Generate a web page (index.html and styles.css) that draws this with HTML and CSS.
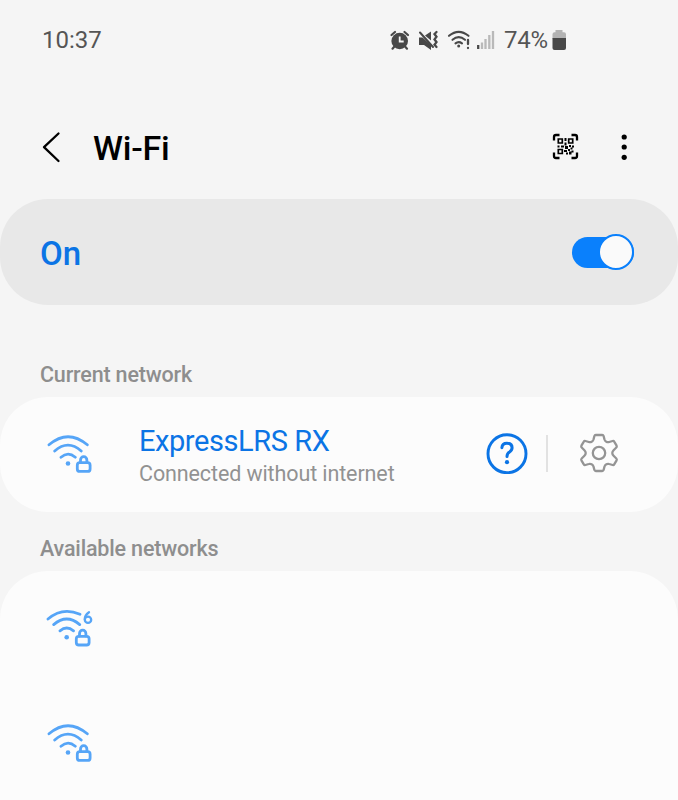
FILE: index.html
```html
<!DOCTYPE html>
<html lang="en">
<head>
<meta charset="utf-8">
<title>Wi-Fi</title>
<link rel="stylesheet" href="styles.css">
</head>
<body>
<div class="status">
  <span class="clock">10:37</span>
  <div class="indicators">
    <svg width="114" height="28" viewBox="386 26 114 28" fill="none" stroke="#484848" stroke-linecap="round">
      <circle cx="399.7" cy="41" r="8.300" fill="#484848" stroke="none"/>
      <path d="M391.5 35l3.5-3M408 35l-3.500-3M394 47l-1.500 1.700M405.500 47l1.500 1.700" stroke-width="2.200"/>
      <path d="M399.700 36.500v5h4" stroke="#f5f5f5" stroke-width="1.800" stroke-linecap="butt"/>
      <path d="M419 37.500h3.500l8.500 7.500v5l-7-5H419zM425 35.500l6-4v9z" fill="#484848" stroke="none"/>
      <path d="M420 32.500l13 14.500" stroke-width="2"/>
      <path d="M436.500 32l-2 2 2 2.700-2 2.700 2 2.700-2 2.700 2 2.200" stroke-width="2.300"/>
      <path d="M449 35.800Q458.700 27.800 468.500 35.800M452.500 39.800Q458.700 34.600 465 39.800M455.500 43.300Q458.700 40.800 462 43.300" stroke-width="2.100"/>
      <circle cx="458.700" cy="46" r="1.500" fill="#484848" stroke="none"/>
      <path d="M468 40v4M468 48v.1" stroke-width="2.300"/>
      <path d="M478.200 45v4" stroke-width="2.300" stroke-linecap="butt"/>
      <path d="M482 42.500v6.500M485.500 39v10M489.300 35v14M493 31v18" stroke="#b9b9b9" stroke-width="2.300" stroke-linecap="butt"/>
    </svg>
    <span class="percent">74%</span>
    <svg width="16" height="24" viewBox="551 28 16 24">
      <path d="M555.500 30h7v2.200h1.500q2 0 2 2V39h-13.500v-4.800q0-2 2-2h1z" fill="#b3b3b3"/>
      <path d="M552.500 38H566v10q0 2-2 2h-9.500q-2 0-2-2z" fill="#484848"/>
    </svg>
  </div>
</div>
<header class="bar">
  <svg class="back" width="24" height="36" viewBox="40 130 24 36" fill="none" stroke="#000" stroke-width="2.300" stroke-linecap="round" stroke-linejoin="round"><path d="M58.500 133.500L44 147.200l14.500 13.800"/></svg>
  <h1>Wi-Fi</h1>
  <svg class="qr" width="28" height="28" viewBox="552 133 28 28" fill="none" stroke="#000">
    <path d="M554 140.500V137q0-2 2-2h3.500M571.500 135h3.500q2 0 2 2v3.500M577 152.500v3.500q0 2-2 2h-3.500M559.500 158H556q-2 0-2-2v-3.500" stroke-width="2.300"/>
    <path d="M558.300 139h4v4h-4zM568.700 139h4v4h-4zM558.300 149.500h4v4h-4z" stroke-width="1.700"/>
    <path d="M564.500 138h2v3h-2zM564.500 142.500h2v3h-2zM557.500 145.500h2v2h-2zM561 145.500h3v2h-3zM565 146h3v3h-3zM569 145h2v2h-2zM572 145.500h2v2h-2zM564 150h3v2h-3zM568 149h2v2h-2zM570.500 147.500h2v2h-2zM566 152.500h2v2h-2zM569 151.500h2.500v3H569zM571.500 150.500h2v2h-2z" fill="#000" stroke="none"/>
  </svg>
  <svg class="more" width="8" height="30" viewBox="620 132 8 30"><circle cx="624.200" cy="137" r="2.600"/><circle cx="624.200" cy="147" r="2.600"/><circle cx="624.200" cy="157.300" r="2.600"/></svg>
</header>
<section class="card master">
  <span class="on">On</span>
  <div class="switch"><div class="thumb"></div></div>
</section>
<h2 class="current">Current network</h2>
<section class="card network">
  <svg class="wifi" width="48" height="44" viewBox="46 431 48 44">
    <path d="M49 444.800Q68 428.600 87.300 444.800M54.700 451Q68 439.200 81.200 451M61 457.200Q68 451 75.300 457.200"/>
    <circle cx="68" cy="463.500" r="2.300"/>
    <rect x="77.300" y="462.700" width="12.800" height="8.700" rx="2.500"/><path d="M80.500 462.500v-2.300a3.200 3.500 0 0 1 6.400 0v2.300"/>
  </svg>
  <div class="label">
    <div class="name">ExpressLRS RX</div>
    <div class="state">Connected without internet</div>
  </div>
  <svg width="42" height="42" viewBox="485.600 432 42 42" fill="none" stroke="#0b74e5" stroke-linecap="round">
    <circle cx="506.600" cy="453.700" r="19" stroke-width="2.900"/>
    <path d="M501.500 447.700q.3-4.500 5-4.500 5.200 0 5.200 4.600 0 2.500-2.600 4.300-2.500 1.600-2.500 4.300" stroke-width="3"/>
    <circle cx="506.600" cy="462.200" r="2.100" fill="#0b74e5" stroke="none"/>
  </svg>
  <i class="divider"></i>
  <svg width="40" height="40" viewBox="-20 -20 40 40" fill="none" stroke="#949494" stroke-width="2.300" stroke-linejoin="round">
    <path d="M-3.200-18H3.200Q4.300-18 4.600-17L5.500-13.500Q6-12 7.300-11.300Q8.700-10.500 10.200-11L13.600-12Q14.700-12.300 15.200-11.400L17.600-7.300Q18.100-6.300 17.300-5.500L14.600-2.800Q13.300-1.500 13.300 0T14.600 2.800L17.300 5.500Q18.100 6.300 17.600 7.300L15.200 11.400Q14.700 12.300 13.600 12L10.200 11Q8.700 10.500 7.300 11.300Q6 12 5.500 13.500L4.600 17Q4.300 18 3.200 18H-3.200Q-4.300 18-4.600 17L-5.500 13.500Q-6 12-7.300 11.300Q-8.700 10.500-10.200 11L-13.600 12Q-14.700 12.300-15.200 11.400L-17.600 7.300Q-18.100 6.300-17.300 5.500L-14.600 2.800Q-13.300 1.500-13.300 0T-14.600-2.800L-17.300-5.500Q-18.100-6.300-17.600-7.300L-15.200-11.400Q-14.700-12.300-13.600-12L-10.200-11Q-8.700-10.500-7.300-11.300Q-6-12-5.500-13.500L-4.600-17Q-4.300-18-3.200-18Z"/>
    <circle r="6.200"/>
  </svg>
</section>
<h2 class="available">Available networks</h2>
<section class="card list">
  <div class="row">
    <svg class="wifi" width="48" height="44" viewBox="46 605 48 44">
      <path d="M48 619Q62.500 606.500 80 614.300M53.700 624.600Q66.700 613.500 79.700 624.600M60 630.800Q66.700 625.300 73.500 630.800"/>
      <circle cx="66.700" cy="637.300" r="2.300"/>
      <rect x="76.300" y="636.300" width="12.800" height="8.700" rx="2.500"/><path d="M79.500 636v-2.300a3.200 3.500 0 0 1 6.400 0v2.300"/>
      <path class="six" d="M89 612.300q-4.400 3.200-4.200 7"/><ellipse class="six" cx="88" cy="619.800" rx="3.200" ry="3.100"/>
    </svg>
  </div>
  <div class="row">
    <svg class="wifi" width="48" height="44" viewBox="46 431 48 44">
      <path d="M49 444.800Q68 428.600 87.300 444.800M54.700 451Q68 439.200 81.200 451M61 457.200Q68 451 75.300 457.200"/>
      <circle cx="68" cy="463.500" r="2.300"/>
      <rect x="77.300" y="462.700" width="12.800" height="8.700" rx="2.500"/><path d="M80.500 462.500v-2.300a3.200 3.500 0 0 1 6.400 0v2.300"/>
    </svg>
  </div>
</section>
</body>
</html>
```
FILE: styles.css
```css
* { box-sizing: border-box; }
html, body { margin: 0; height: 800px; overflow: hidden; }
body {
  display: flex;
  flex-direction: column;
  background: #f5f5f5;
  font-family: Roboto, sans-serif;
}
svg { display: block; flex: none; }
h1, h2 { margin: 0; font-weight: 500; white-space: nowrap; }
.status {
  height: 80px;
  flex: none;
  padding: 0 111px 0 42px;
  display: flex;
  align-items: center;
  justify-content: space-between;
  color: #555;
  font-size: 24px;
}
.indicators { display: flex; align-items: center; }
.percent { width: 51px; padding-left: 4px; white-space: nowrap; letter-spacing: -0.2px; }
.bar {
  height: 119px;
  flex: none;
  display: flex;
  align-items: flex-start;
  padding: 50px 50px 0 40px;
}
h1 { font-size: 34px; line-height: 36px; margin-left: 29px; letter-spacing: -0.2px; }
.qr { margin: 3px 40px 0 auto; }
.more { margin-top: 2px; }
.card { flex: none; background: #fcfcfc; border-radius: 48px; }
.master {
  height: 106px;
  display: flex;
  align-items: center;
  justify-content: space-between;
  padding: 0 44px 0 40px;
  background: #e8e8e8;
}
.on { color: #0b74e5; font-size: 33px; font-weight: 500; padding-top: 2px; }
.switch {
  width: 62px;
  height: 31px;
  border-radius: 16px;
  background: #0a80fc;
  display: flex;
  align-items: center;
  justify-content: flex-end;
}
.thumb {
  flex: none;
  width: 36px;
  height: 36px;
  border: 2px solid #0a80fc;
  border-radius: 50%;
  background: #fafafa;
}
h2 { flex: none; padding-left: 40px; color: #8e8e8e; font-size: 21.5px; line-height: 26px; letter-spacing: -0.17px; }
.current { margin: 57px 0 9px; }
.available { margin: 24px 0 9px; }
.network {
  height: 115px;
  display: flex;
  align-items: center;
  padding: 0 59px 3px 46px;
}
.wifi { fill: none; stroke: #56a5f7; stroke-width: 2.8; stroke-linecap: round; }
.wifi circle { fill: #56a5f7; stroke: none; }
.label { margin: 0 auto 0 45px; padding-top: 5px; white-space: nowrap; }
.name { color: #0b74e5; font-size: 29px; line-height: 36px; letter-spacing: -0.43px; }
.state { color: #929292; font-size: 21.5px; line-height: 30px; letter-spacing: -0.11px; }
.divider { width: 2px; height: 37px; margin: 0 31px 0 18px; background: #e2e2e2; }
.list { flex: 1; border-radius: 48px 48px 0 0; padding: 0 46px; }
.row { height: 115px; padding-bottom: 3px; display: flex; align-items: center; }
.six { stroke-width: 2.3; }
```
